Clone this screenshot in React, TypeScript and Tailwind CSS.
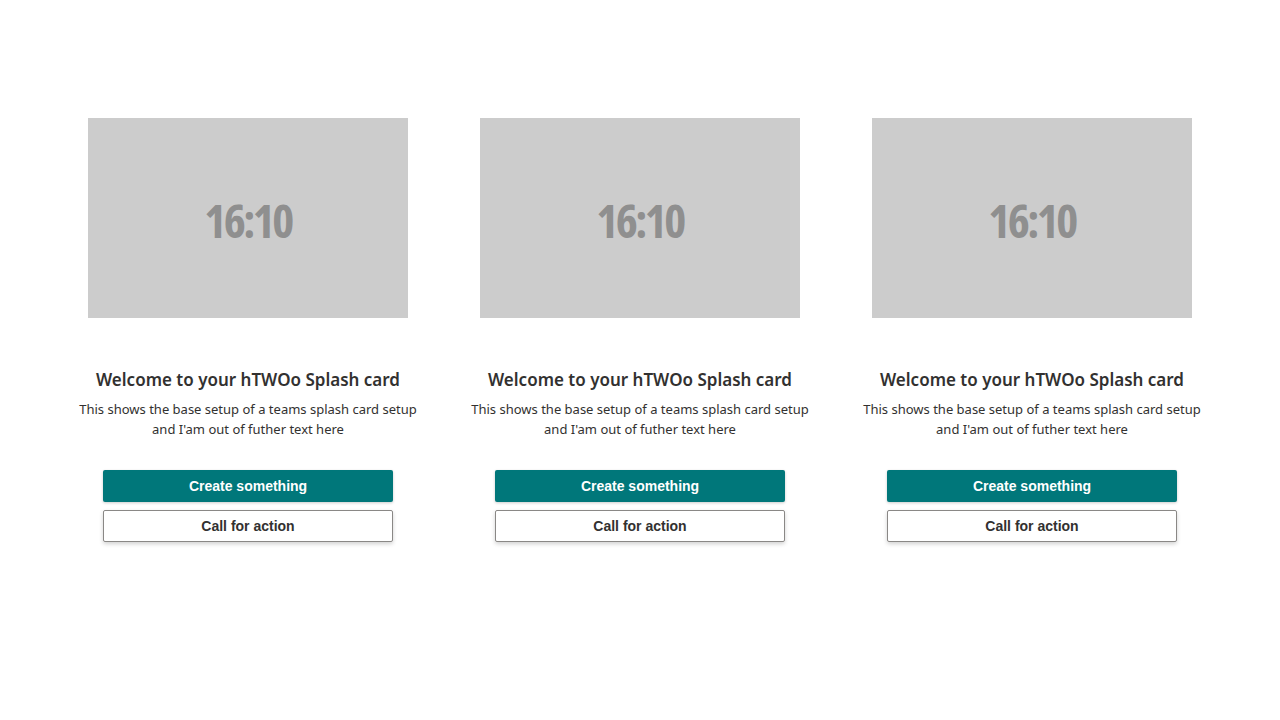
import React from 'react';

const cards = [0, 1, 2];

function SplashCard() {
  return (
    <div className="flex w-[392px] flex-col items-center">
      {/* placeholder image */}
      <div className="flex h-[200px] w-[320px] items-center justify-center bg-[#cccccc]">
        <span className="mt-[4px] font-['Open_Sans',sans-serif] text-[47px] leading-none font-bold tracking-[-2.6px] text-[#8f8f8f] [font-stretch:condensed]">
          16:10
        </span>
      </div>

      <h2 className="mt-[50px] font-['Noto_Sans',sans-serif] text-[17px] font-semibold leading-[24px] text-[#323130]">
        Welcome to your hTWOo Splash card
      </h2>
      <p className="mt-[7px] text-center font-['Noto_Sans',sans-serif] text-[13px] leading-[20px] text-[#323130]">
        This shows the base setup of a teams splash card setup
        <br />
        and I'am out of futher text here
      </p>

      <div className="mt-[31px] flex flex-col gap-[8px]">
        <button className="h-[32px] w-[290px] rounded-[2px] bg-[#00777a] font-['Liberation_Sans',sans-serif] text-[14px] font-bold text-white shadow-[0_1px_3px_rgba(0,0,0,0.2)]">
          Create something
        </button>
        <button className="h-[32px] w-[290px] rounded-[2px] border border-[#8a8886] bg-white font-['Liberation_Sans',sans-serif] text-[14px] font-bold text-[#323130] shadow-[0_2px_4px_rgba(0,0,0,0.18)]">
          Call for action
        </button>
      </div>
    </div>
  );
}

export default function App() {
  return (
    <div className="flex h-[720px] w-full justify-center bg-white pt-[118px]">
      {cards.map((i) => (
        <SplashCard key={i} />
      ))}
    </div>
  );
}
